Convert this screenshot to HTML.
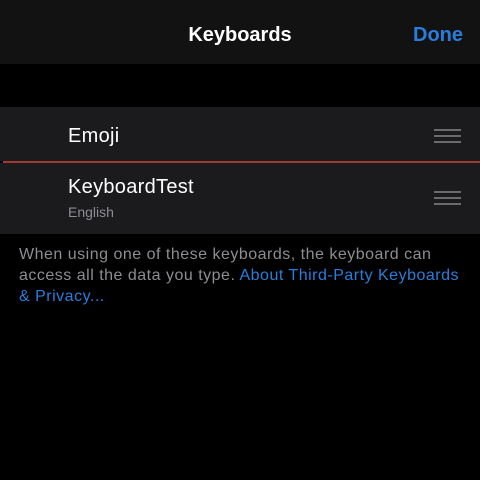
<!DOCTYPE html>
<html><head><style>
body{margin:0;width:480px;height:480px;background:#000;font-family:"Liberation Sans",sans-serif;position:relative;overflow:hidden}
.nav{position:absolute;left:0;top:0;width:480px;height:64px;background:#121212}
.title{position:absolute;top:24px;left:0;width:480px;text-align:center;color:#fff;font-size:20px;font-weight:bold}
.done{position:absolute;top:24px;right:17px;color:#2a7ddb;font-size:20px;font-weight:bold}
.cell{position:absolute;left:0;width:480px;background:#1b1b1d}
.t{position:absolute;left:68px;color:#fff;font-size:20px;letter-spacing:0.3px}
.s{position:absolute;left:68px;color:#8d8d92;font-size:14px}
.g{position:absolute;left:434px;width:27px;height:2px;background:#6b6b6e}
.foot{position:absolute;left:19px;top:244px;width:455px;color:#8d8d92;font-size:16px;line-height:21px;letter-spacing:0.5px}
.foot a{color:#2a7ddb;text-decoration:none}
</style></head><body>
<div class="nav"><div class="title">Keyboards</div><div class="done">Done</div></div>
<div class="cell" style="top:107px;height:54px">
<div class="t" style="top:18px">Emoji</div>
<div class="g" style="top:22px"></div><div class="g" style="top:28px"></div><div class="g" style="top:34px"></div>
</div>
<div style="position:absolute;left:3px;top:161px;width:477px;height:2px;background:#a23a34"></div>
<div class="cell" style="top:163px;height:71px">
<div class="t" style="top:13px">KeyboardTest</div>
<div class="s" style="top:41px">English</div>
<div class="g" style="top:28px"></div><div class="g" style="top:34px"></div><div class="g" style="top:40px"></div>
</div>
<div class="foot">When using one of these keyboards, the keyboard can<br>access all the data you type. <a>About Third-Party Keyboards<br>&amp; Privacy...</a></div>
</body></html>
